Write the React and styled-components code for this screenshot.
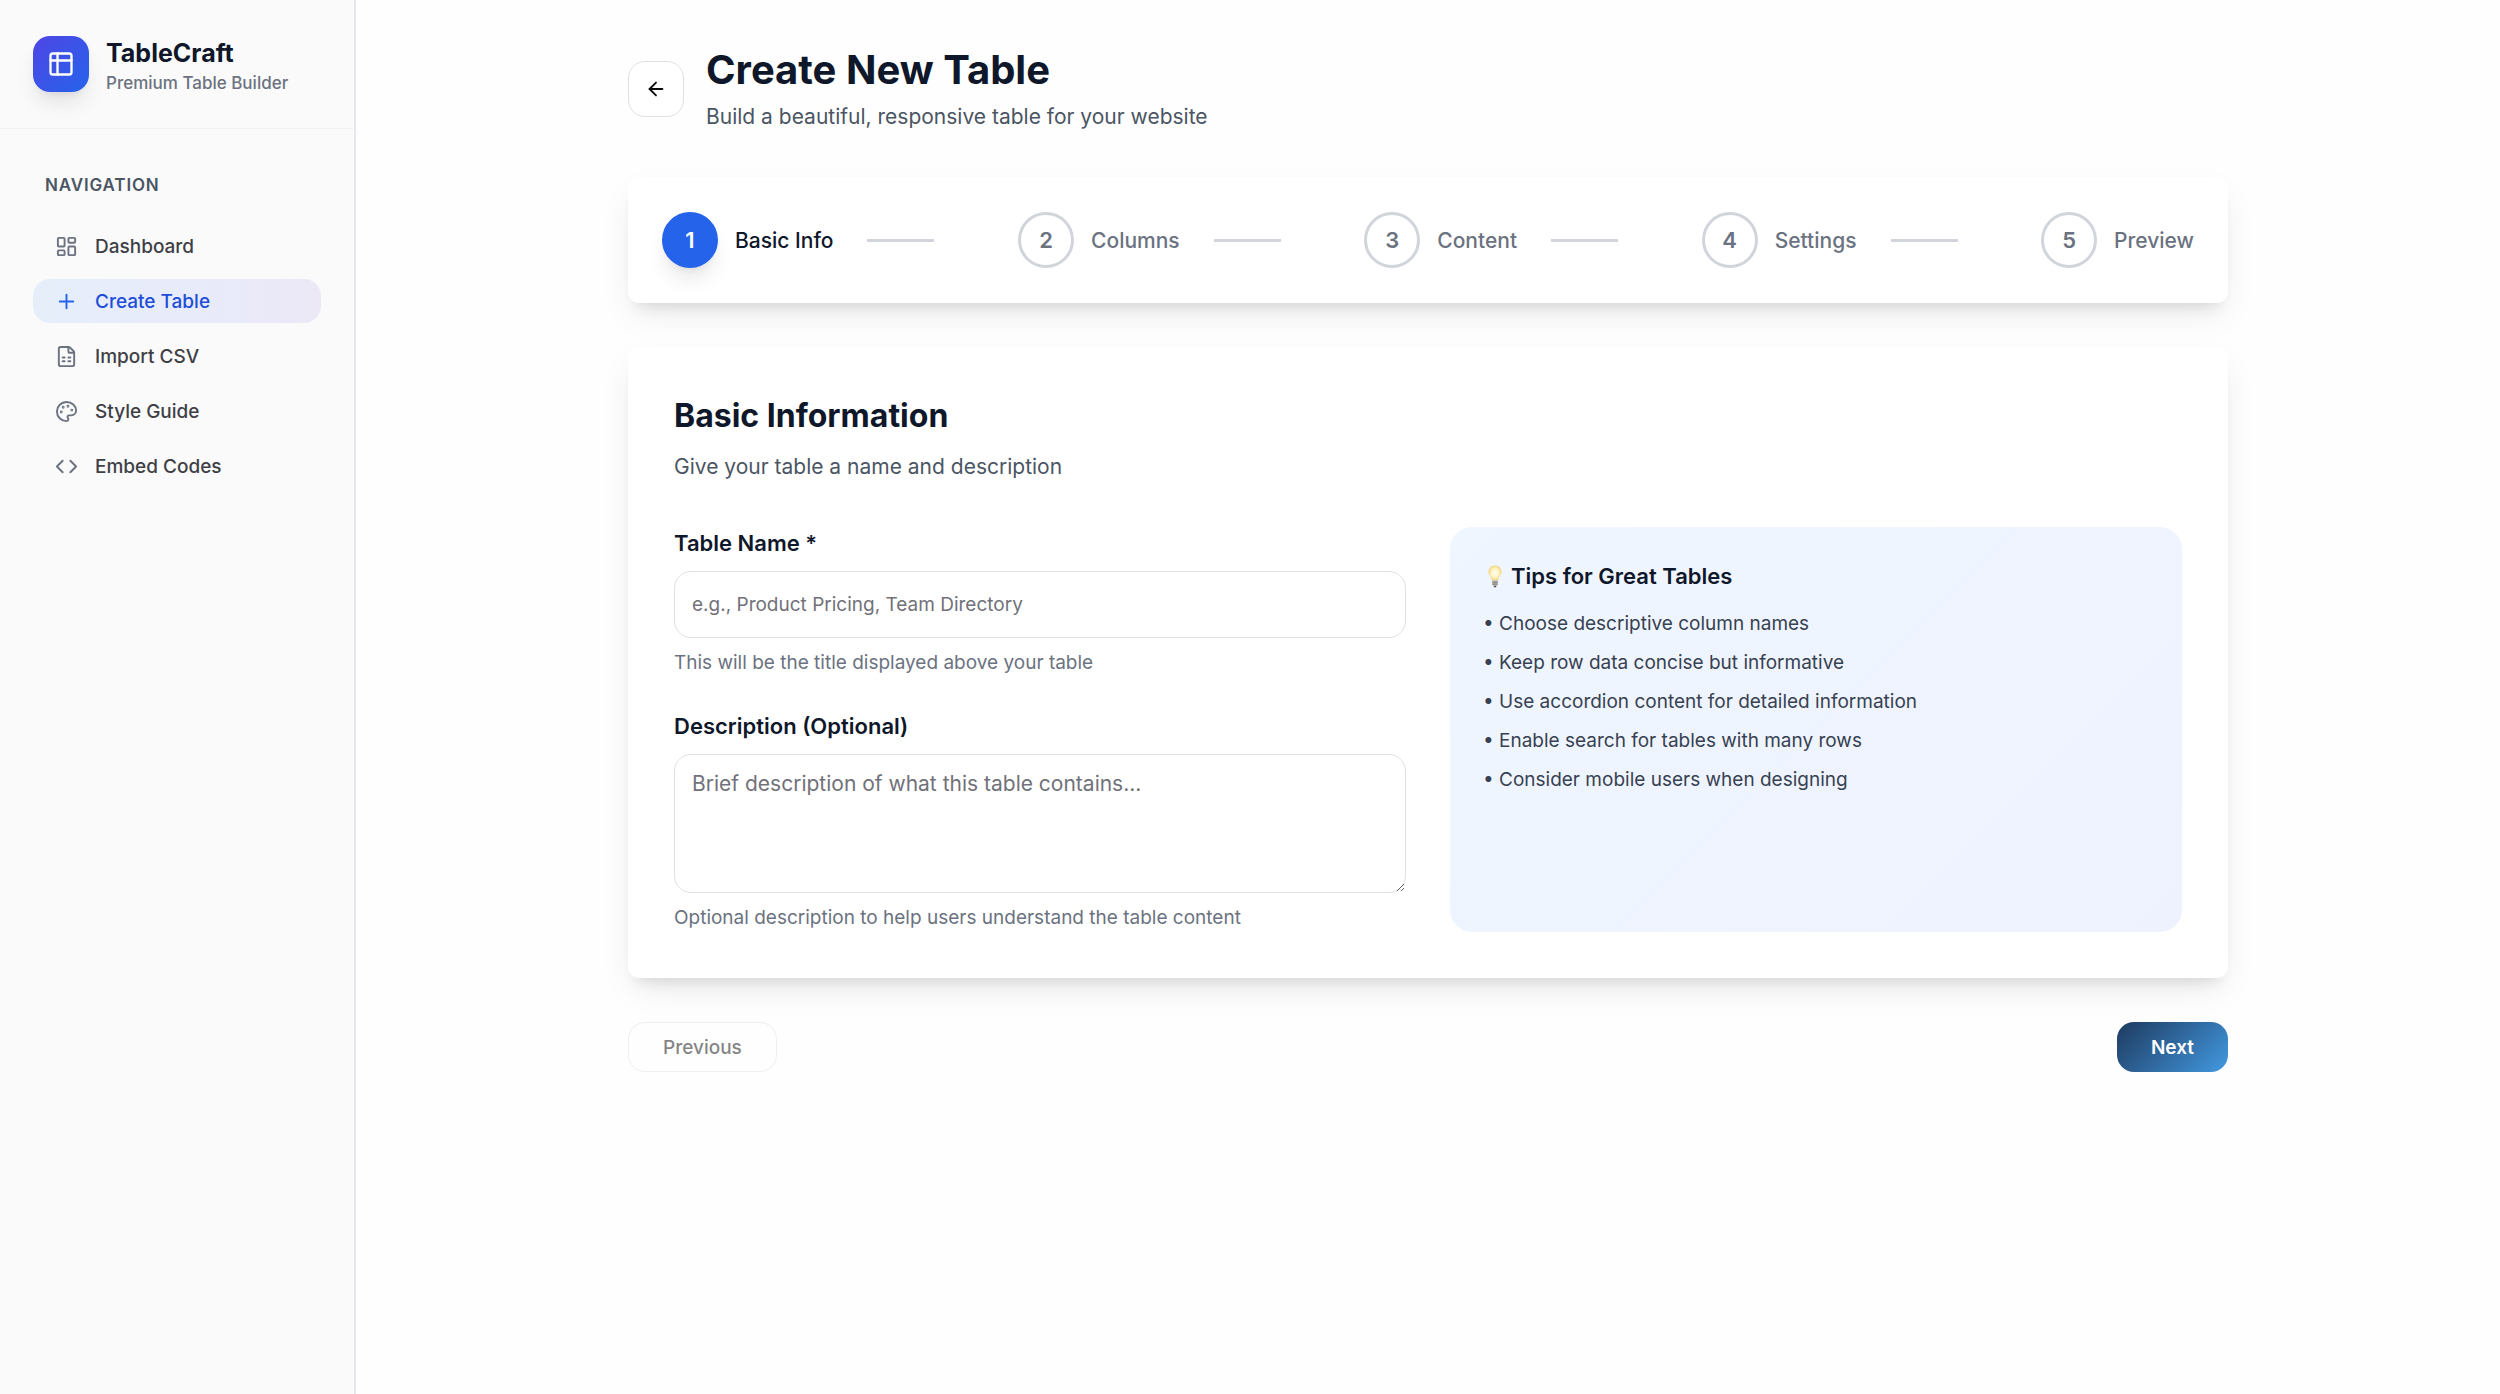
import React, { useState } from "react";
import styled, { createGlobalStyle } from "styled-components";
import {
  ArrowLeft,
  Code,
  FileSpreadsheet,
  LayoutDashboard,
  Palette,
  Plus,
} from "lucide-react";

const navItems = [
  { label: "Dashboard", icon: LayoutDashboard },
  { label: "Create Table", icon: Plus, active: true },
  { label: "Import CSV", icon: FileSpreadsheet },
  { label: "Style Guide", icon: Palette },
  { label: "Embed Codes", icon: Code },
];

const steps = ["Basic Info", "Columns", "Content", "Settings", "Preview"];

const tips = [
  "Choose descriptive column names",
  "Keep row data concise but informative",
  "Use accordion content for detailed information",
  "Enable search for tables with many rows",
  "Consider mobile users when designing",
];

const LogoIcon = () => (
  <svg
    width="28"
    height="28"
    viewBox="0 0 24 24"
    fill="none"
    stroke="currentColor"
    strokeWidth="2"
    strokeLinecap="round"
    strokeLinejoin="round"
    aria-hidden="true"
  >
    <rect x="3" y="3" width="18" height="18" rx="2" />
    <path d="M9 3v18M3 9h18" />
  </svg>
);

const BulbIcon = () => (
  <svg width="24" height="24" viewBox="-4 1 24 24" aria-hidden="true">
    <defs>
      <radialGradient id="glow" cx="50%" cy="50%" r="55%">
        <stop offset="0" stopColor="#fffdf0" />
        <stop offset="0.55" stopColor="#fff3c4" />
        <stop offset="1" stopColor="#efcb66" />
      </radialGradient>
    </defs>
    <path
      d="M8 1.500C4.200 1.500 1.500 4.300 1.500 7.900c0 3.200 2.600 4.700 3.500 8.600h6c.9-3.900 3.500-5.400 3.500-8.600C14.500 4.300 11.800 1.500 8 1.500z"
      fill="url(#glow)"
    />
    <path d="M5.300 16.500h5.400v4L9.500 22h-3l-1.200-1.500z" fill="#b3b2ad" />
    <path d="M5.300 18.200h5.400M5.300 20.100h5.400" stroke="#77736c" strokeWidth="0.8" />
    <path d="M6.500 22h3l-.6 1.200H7.100z" fill="#4f4c48" />
  </svg>
);

const App = () => {
  const [name, setName] = useState("");
  const [description, setDescription] = useState("");

  return (
    <Layout>
      <GlobalStyle />
      <Sidebar>
        <Brand>
          <div className="brand__logo">
            <LogoIcon />
          </div>
          <div className="brand__text">
            <div className="brand__name">TableCraft</div>
            <div className="brand__tagline">Premium Table Builder</div>
          </div>
        </Brand>
        <Nav>
          <NavTitle>Navigation</NavTitle>
          <NavList>
            {navItems.map(({ label, icon: Icon, active }) => (
              <li key={label}>
                <NavLink href="#" $active={active}>
                  <Icon size={23} />
                  {label}
                </NavLink>
              </li>
            ))}
          </NavList>
        </Nav>
      </Sidebar>

      <Main>
        <Container>
          <PageHeader>
            <BackButton type="button" aria-label="Back">
              <ArrowLeft size={22} />
            </BackButton>
            <div>
              <h1>Create New Table</h1>
              <p>Build a beautiful, responsive table for your website</p>
            </div>
          </PageHeader>

          <Stepper>
            {steps.map((step, index) => (
              <Step key={step} $active={index === 0}>
                <span className="step__circle">{index + 1}</span>
                <span className="step__label">{step}</span>
                {index < steps.length - 1 && <span className="step__line" />}
              </Step>
            ))}
          </Stepper>

          <FormCard>
            <CardHeader>
              <h2>Basic Information</h2>
              <p>Give your table a name and description</p>
            </CardHeader>
            <Columns>
              <Fields>
                <Field>
                  <Label htmlFor="name">Table Name *</Label>
                  <Input
                    id="name"
                    value={name}
                    onChange={(e) => setName(e.target.value)}
                    placeholder="e.g., Product Pricing, Team Directory"
                  />
                  <Hint>This will be the title displayed above your table</Hint>
                </Field>
                <Field>
                  <Label htmlFor="description">Description (Optional)</Label>
                  <TextArea
                    id="description"
                    value={description}
                    onChange={(e) => setDescription(e.target.value)}
                    placeholder="Brief description of what this table contains..."
                  />
                  <Hint>
                    Optional description to help users understand the table
                    content
                  </Hint>
                </Field>
              </Fields>
              <Tips>
                <h3>
                  <BulbIcon />
                  Tips for Great Tables
                </h3>
                <ul>
                  {tips.map((tip) => (
                    <li key={tip}>• {tip}</li>
                  ))}
                </ul>
              </Tips>
            </Columns>
          </FormCard>

          <Footer>
            <PreviousButton type="button" disabled>
              Previous
            </PreviousButton>
            <NextButton type="button">Next</NextButton>
          </Footer>
        </Container>
      </Main>
    </Layout>
  );
};

export default App;

const GlobalStyle = createGlobalStyle`
  * {
    box-sizing: border-box;
  }
  body {
    margin: 0;
    background: #fefefe;
    color: #0f172a;
    font-family: Inter, "Liberation Sans", sans-serif;
    -webkit-font-smoothing: antialiased;
  }
  h1, h2, h3, p, ul {
    margin: 0;
    padding: 0;
  }
  ul {
    list-style: none;
  }
  button, input, textarea {
    font-family: inherit;
  }
`;

const Layout = styled.div`
  display: flex;
  min-height: 100vh;
`;

const Sidebar = styled.aside`
  flex: 0 0 356px;
  background: #fafafa;
  border-right: 2px solid #e5e7eb;
`;

const Brand = styled.div`
  display: flex;
  align-items: center;
  gap: 17px;
  height: 129px;
  padding: 0 33px;
  border-bottom: 1px solid #f1f2f4;
  .brand__logo {
    display: flex;
    align-items: center;
    justify-content: center;
    width: 56px;
    height: 56px;
    border-radius: 17px;
    color: #fff;
    background: linear-gradient(135deg, #4f46e5, #2563eb);
    box-shadow: 0 14px 21px -4px rgba(0, 0, 0, 0.1),
      0 6px 8px -6px rgba(0, 0, 0, 0.1);
  }
  .brand__text {
    padding-top: 4px;
  }
  .brand__name {
    font-size: 25px;
    line-height: 35px;
    font-weight: 700;
  }
  .brand__tagline {
    font-size: 17px;
    line-height: 25px;
    font-weight: 500;
    color: #6b7280;
  }
`;

const Nav = styled.nav`
  padding: 39px 33px;
`;

const NavTitle = styled.div`
  padding: 0 12px;
  margin-bottom: 22px;
  font-size: 17px;
  line-height: 34px;
  font-weight: 600;
  letter-spacing: 0.05em;
  text-transform: uppercase;
  color: #4b5563;
`;

const NavList = styled.ul`
  display: flex;
  flex-direction: column;
  gap: 11px;
`;

const NavLink = styled.a`
  display: flex;
  align-items: center;
  gap: 17px;
  height: 44px;
  padding: 0 22px;
  border-radius: 17px;
  font-size: 19px;
  font-weight: 500;
  text-decoration: none;
  color: ${({ $active }) => ($active ? "#1d4ed8" : "#3f3f46")};
  background: ${({ $active }) =>
    $active ? "linear-gradient(90deg, #e6eefa, #e8eafa 65%, #ece8f6)" : "none"};
  svg {
    color: ${({ $active }) => ($active ? "#2563eb" : "#6b7280")};
  }
`;

const Main = styled.main`
  flex: 1;
  min-width: 0;
  padding: 44px;
`;

const Container = styled.div`
  max-width: 1600px;
  margin: 0 auto;
`;

const PageHeader = styled.header`
  display: flex;
  align-items: center;
  gap: 22px;
  margin-bottom: 44px;
  h1 {
    font-size: 40px;
    line-height: 52px;
    font-weight: 700;
  }
  p {
    margin-top: 4px;
    font-size: 21px;
    line-height: 33px;
    color: #4b5563;
  }
`;

const BackButton = styled.button`
  display: flex;
  align-items: center;
  justify-content: center;
  width: 56px;
  height: 56px;
  padding: 0;
  border: 1px solid #dfe1e5;
  border-radius: 17px;
  background: #fff;
  color: #0a0a0a;
`;

const Card = styled.section`
  border-radius: 11px;
  background: #fff;
  box-shadow: 0 14px 35px -7px rgba(0, 0, 0, 0.1),
    0 11px 14px -8px rgba(0, 0, 0, 0.1);
`;

const Stepper = styled(Card)`
  display: flex;
  align-items: center;
  justify-content: space-between;
  padding: 35px 34px;
  margin-bottom: 44px;
`;

const Step = styled.div`
  display: flex;
  align-items: center;
  font-size: 22px;
  .step__circle {
    display: flex;
    align-items: center;
    justify-content: center;
    width: 56px;
    height: 56px;
    border: 3px solid ${({ $active }) => ($active ? "#2563eb" : "#d1d5db")};
    border-radius: 50%;
    font-weight: 600;
    color: ${({ $active }) => ($active ? "#fff" : "#6b7280")};
    background: ${({ $active }) => ($active ? "#2563eb" : "#fff")};
    box-shadow: ${({ $active }) =>
      $active
        ? "0 14px 21px -4px rgba(0, 0, 0, 0.1), 0 6px 8px -6px rgba(0, 0, 0, 0.1)"
        : "none"};
  }
  .step__label {
    margin-left: 17px;
    font-size: 21px;
    font-weight: 500;
    color: ${({ $active }) => ($active ? "#0f172a" : "#6b7280")};
  }
  .step__line {
    width: 67px;
    height: 3px;
    margin: 0 34px;
    background: #d1d5db;
  }
`;

const FormCard = styled(Card)`
  padding: 46px;
  margin-bottom: 44px;
`;

const CardHeader = styled.div`
  margin-bottom: 44px;
  h2 {
    font-size: 32px;
    line-height: 46px;
    font-weight: 700;
  }
  p {
    margin-top: 11px;
    font-size: 21px;
    line-height: 33px;
    color: #4b5563;
  }
`;

const Columns = styled.div`
  display: grid;
  grid-template-columns: 1fr 1fr;
  gap: 44px;
`;

const Fields = styled.div`
  display: flex;
  flex-direction: column;
  gap: 33px;
`;

const Field = styled.div`
  display: flex;
  flex-direction: column;
`;

const Label = styled.label`
  margin-bottom: 11px;
  font-size: 22px;
  line-height: 33px;
  font-weight: 600;
`;

const Input = styled.input`
  height: 67px;
  padding: 0 17px;
  border: 1px solid #dfe1e5;
  border-radius: 17px;
  background: #fff;
  font-size: 19px;
  &::placeholder {
    color: #71717a;
  }
`;

const TextArea = styled.textarea`
  height: 139px;
  padding: 12px 17px;
  border: 1px solid #dfe1e5;
  border-radius: 17px;
  background: #fff;
  font-size: 21px;
  line-height: 33px;
  resize: vertical;
  &::placeholder {
    color: #71717a;
  }
`;

const Hint = styled.p`
  margin-top: 11px;
  font-size: 19px;
  line-height: 28px;
  color: #6b7280;
`;

const Tips = styled.aside`
  padding: 33px;
  border-radius: 22px;
  background: linear-gradient(135deg, #eff6ff, #eef2ff);
  h3 {
    display: flex;
    align-items: center;
    gap: 4px;
    margin-bottom: 17px;
    font-size: 22px;
    line-height: 33px;
    font-weight: 600;
  }
  ul {
    display: flex;
    flex-direction: column;
    gap: 11px;
  }
  li {
    font-size: 19px;
    line-height: 28px;
    color: #374151;
  }
`;

const Footer = styled.footer`
  display: flex;
  justify-content: space-between;
`;

const Button = styled.button`
  height: 50px;
  padding: 0 34px;
  border-radius: 17px;
  font-size: 19px;
`;

const PreviousButton = styled(Button)`
  border: 1px solid #dfe1e5;
  background: #fff;
  color: #0a0a0a;
  font-weight: 500;
  opacity: 0.5;
`;

const NextButton = styled(Button)`
  border: none;
  background: linear-gradient(135deg, #1e3a5f, #4299e1);
  color: #fff;
  font-weight: 600;
`;
